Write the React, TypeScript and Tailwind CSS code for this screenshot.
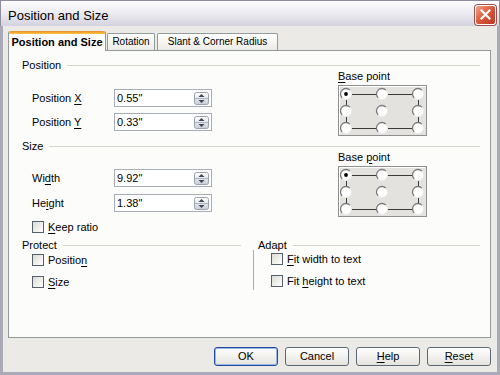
import React from "react";

// Underlined mnemonic letter
function U({ children }: { children: React.ReactNode }) {
  return <span className="underline underline-offset-[2px] decoration-[1px]">{children}</span>;
}

function Heading({ children, className = "" }: { children: React.ReactNode; className?: string }) {
  return (
    <div className={`flex items-center h-[10px] ${className}`}>
      <span className="leading-none">{children}</span>
      <div className="flex-1 h-px bg-[#d5d4c8] ml-[6px]" />
    </div>
  );
}

function Spinner() {
  return (
    <svg width="15" height="13" viewBox="0 0 15 13">
      <defs>
        <linearGradient id="spg" x1="0" y1="0" x2="0" y2="1">
          <stop offset="0" stopColor="#ffffff" />
          <stop offset="1" stopColor="#c9cdd6" />
        </linearGradient>
      </defs>
      <rect x="0.5" y="0.5" width="14" height="12" rx="2" fill="url(#spg)" stroke="#9ba2ae" />
      <line x1="1" y1="6.5" x2="14" y2="6.5" stroke="#aeb4bf" />
      <path d="M4.5 5 L7.5 2 L10.5 5 Z" fill="#3d4653" />
      <path d="M4.5 8 L7.5 11 L10.5 8 Z" fill="#3d4653" />
    </svg>
  );
}

function SpinField({ value }: { value: string }) {
  return (
    <div className="w-[98px] h-[18px] bg-white border border-[#a7adb6] flex items-center pl-[2px] pr-[2px]">
      <span className="flex-1 leading-none">{value}</span>
      <Spinner />
    </div>
  );
}

function FieldRow({ label, value }: { label: React.ReactNode; value: string }) {
  return (
    <div className="flex items-center h-[18px]">
      <span className="w-[82px]">{label}</span>
      <SpinField value={value} />
    </div>
  );
}

function Check({ children }: { children: React.ReactNode }) {
  return (
    <div className="flex items-center h-[12px] gap-[4px]">
      <div className="w-[12px] h-[12px] border border-[#55606c] bg-gradient-to-br from-[#dcdcd5] to-[#ffffff]" />
      <span className="leading-none">{children}</span>
    </div>
  );
}

function Radio({ cx, cy, on }: { cx: number; cy: number; on?: boolean }) {
  return (
    <g>
      <circle cx={cx} cy={cy} r="5.5" fill="#ffffff" stroke="#ececec" />
      <path
        d={`M${cx - 3.9} ${cy + 3.9} A5.5 5.5 0 0 1 ${cx + 3.9} ${cy - 3.9}`}
        fill="none"
        stroke="#7a7a7a"
        strokeWidth="1.3"
      />
      {on && <circle cx={cx} cy={cy} r="1.9" fill="#000" />}
    </g>
  );
}

function BasePoint() {
  const xs = [8, 44, 80];
  const ys = [9, 26, 43];
  return (
    <svg width="89" height="51" viewBox="0 0 89 51">
      <rect x="0.5" y="0.5" width="88" height="50" fill="#e3e2de" stroke="#8f8f8f" />
      <line x1="1.5" y1="1.5" x2="87.5" y2="1.5" stroke="#ffffff" />
      <line x1="1.5" y1="1.5" x2="1.5" y2="49.5" stroke="#ffffff" />
      <g stroke="#3a3a3a" strokeWidth="1">
        <line x1="8" y1="9.5" x2="80" y2="9.5" />
        <line x1="8" y1="43.5" x2="80" y2="43.5" />
        <line x1="8.5" y1="9" x2="8.5" y2="43" />
        <line x1="80.5" y1="9" x2="80.5" y2="43" />
      </g>
      {ys.map((y, r) => xs.map((x, c) => <Radio key={`${r}${c}`} cx={x} cy={y} on={r === 0 && c === 0} />))}
    </svg>
  );
}

function Button({ children, def }: { children: React.ReactNode; def?: boolean }) {
  return (
    <div
      className={`w-[64px] h-[19px] rounded-[3px] flex items-center justify-center bg-gradient-to-b from-[#ffffff] to-[#e4e3de] border ${
        def ? "border-[#1e4b9b] shadow-[inset_0_0_0_1px_#9cb7e6]" : "border-[#5d6877]"
      }`}
    >
      <span className="leading-none">{children}</span>
    </div>
  );
}

export default function App() {
  return (
    <div className="w-[500px] h-[375px] flex flex-col bg-[#ebeae6] text-[11px] text-black font-['Liberation_Sans',Arial,sans-serif] overflow-hidden">
      {/* title bar */}
      <div className="h-[26px] flex items-center justify-between pl-[7px] pr-[3px] border border-b-0 border-[#8d8d9e] bg-gradient-to-b from-[#fdfdfe] via-[#ecebf1] to-[#d3d2de]">
        <span className="text-[13px] pt-[3px] leading-none">Position and Size</span>
        <div className="w-[21px] h-[20px] mt-[2px] rounded-[3px] border border-white bg-gradient-to-br from-[#f0a28c] via-[#d9573a] to-[#b83a22] flex items-center justify-center shadow-[0_0_0_1px_#a05050]">
          <svg width="11" height="11" viewBox="0 0 11 11">
            <path d="M1.5 1.5 L9.5 9.5 M9.5 1.5 L1.5 9.5" stroke="#ffffff" strokeWidth="2.2" strokeLinecap="square" />
          </svg>
        </div>
      </div>

      {/* body */}
      <div className="flex-1 flex flex-col border-x-[3px] border-b-[3px] border-[#a9a9b7] pl-[5px] pr-[6px] pt-[5px]">
        {/* tabs */}
        <div className="flex items-end h-[19px]">
          <div className="relative z-10 -mb-px h-[20px] w-[98px] flex flex-col bg-[#fcfcfb] border-x border-[#919b9c] rounded-t-[2px]">
            <div className="h-[3px] bg-gradient-to-b from-[#e68b2c] to-[#ffc73c] rounded-t-[2px]" />
            <div className="flex-1 flex items-center justify-center font-bold leading-none">Position and Size</div>
          </div>
          <div className="h-[17px] w-[48px] ml-px flex items-center justify-center text-[10px] leading-none border border-b-0 border-[#919b9c] rounded-t-[2px] bg-gradient-to-b from-[#ffffff] to-[#ecebe6]">
            Rotation
          </div>
          <div className="h-[17px] w-[121px] ml-[2px] flex items-center justify-center text-[10px] leading-none border border-b-0 border-[#919b9c] rounded-t-[2px] bg-gradient-to-b from-[#ffffff] to-[#ecebe6]">
            Slant &amp; Corner Radius
          </div>
        </div>

        {/* panel */}
        <div className="h-[288px] bg-[#fcfcfb] border border-[#919b9c] flex flex-col pl-[13px] pr-[10px] pt-[9px]">
          <Heading>Position</Heading>
          <div className="flex">
            <div className="w-[316px] pl-[10px] pt-[19px] flex flex-col gap-[6px]">
              <FieldRow label={<>Position <U>X</U></>} value={'0.55"'} />
              <FieldRow label={<>Position <U>Y</U></>} value={'0.33"'} />
            </div>
            <div className="flex flex-col">
              <div className="h-[12px] flex items-center">
                <span className="leading-none"><U>B</U>ase point</span>
              </div>
              <div className="mt-[3px] flex">
                <BasePoint />
              </div>
            </div>
          </div>

          <Heading className="mt-[5px]">Size</Heading>
          <div className="flex">
            <div className="w-[316px] pl-[10px] pt-[18px] flex flex-col">
              <FieldRow label={<>Wi<U>d</U>th</>} value={'9.92"'} />
              <div className="mt-[7px]">
                <FieldRow label={<>He<U>i</U>ght</>} value={'1.38"'} />
              </div>
              <div className="mt-[9px]">
                <Check><U>K</U>eep ratio</Check>
              </div>
            </div>
            <div className="flex flex-col">
              <div className="h-[12px] flex items-center">
                <span className="leading-none">Base <U>p</U>oint</span>
              </div>
              <div className="mt-[3px] flex">
                <BasePoint />
              </div>
            </div>
          </div>

          <div className="flex mt-[7px]">
            <div className="w-[219px] flex flex-col">
              <Heading>Protect</Heading>
              <div className="pl-[10px] pt-[4px] flex flex-col gap-[10px]">
                <Check>Positio<U>n</U></Check>
                <Check><U>S</U>ize</Check>
              </div>
            </div>
            <div className="w-px h-[40px] mt-[10px] ml-[12px] bg-[#aaa9a2]" />
            <div className="flex-1 ml-[4px] flex flex-col">
              <Heading>Adapt</Heading>
              <div className="pl-[13px] pt-[3px] flex flex-col gap-[10px]">
                <Check><U>F</U>it width to text</Check>
                <Check>Fit <U>h</U>eight to text</Check>
              </div>
            </div>
          </div>
        </div>

        {/* buttons */}
        <div className="flex justify-end gap-[7px] pt-[9px]">
          <Button def>OK</Button>
          <Button>Cancel</Button>
          <Button><U>H</U>elp</Button>
          <Button><U>R</U>eset</Button>
        </div>
      </div>
    </div>
  );
}
